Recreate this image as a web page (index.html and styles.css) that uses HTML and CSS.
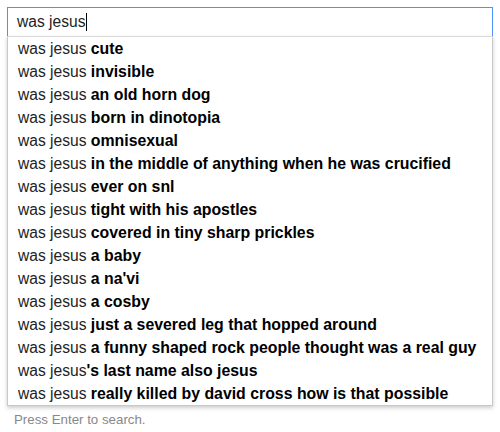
FILE: index.html
```html
<!DOCTYPE html>
<html>
<head>
<meta charset="utf-8">
<link rel="stylesheet" href="styles.css">
</head>
<body>
<div class="page">
  <div class="field">was jesus<span class="caret"></span></div>
  <ul class="suggest">
    <li>was jesus <b>cute</b></li>
    <li>was jesus <b>invisible</b></li>
    <li>was jesus <b>an old horn dog</b></li>
    <li>was jesus <b>born in dinotopia</b></li>
    <li>was jesus <b>omnisexual</b></li>
    <li>was jesus <b>in the middle of anything when he was crucified</b></li>
    <li>was jesus <b>ever on snl</b></li>
    <li>was jesus <b>tight with his apostles</b></li>
    <li>was jesus <b>covered in tiny sharp prickles</b></li>
    <li>was jesus <b>a baby</b></li>
    <li>was jesus <b>a na'vi</b></li>
    <li>was jesus <b>a cosby</b></li>
    <li>was jesus <b>just a severed leg that hopped around</b></li>
    <li>was jesus <b>a funny shaped rock people thought was a real guy</b></li>
    <li>was jesus<b>'s last name also jesus</b></li>
    <li>was jesus <b>really killed by david cross how is that possible</b></li>
  </ul>
  <p class="hint">Press Enter to search.</p>
</div>
</body>
</html>
```

FILE: styles.css
```css
html, body {
  margin: 0;
  padding: 0;
  background: #fff;
}
body {
  font-family: "Liberation Sans", Arial, sans-serif;
  color: #222;
}
.page {
  position: relative;
  padding: 7px 7px 0 7px;
}
.page::before {
  content: "";
  position: absolute;
  top: 0;
  left: 0;
  right: 0;
  height: 51px;
  background: #f1f1f1;
  border-bottom: 1px solid #e5e5e5;
  z-index: -1;
}
.field {
  box-sizing: border-box;
  height: 29px;
  border: 1px solid #4d90fe;
  border-bottom: none;
  background: #fff;
  padding: 0 9px;
  font-size: 15.6px;
  line-height: 28px;
  display: flex;
  align-items: center;
  color: #222;
}
.caret {
  display: inline-block;
  width: 1px;
  height: 18px;
  background: #000;
  margin-left: 1px;
}
.suggest {
  list-style: none;
  margin: 0;
  padding: 0;
  background: #fff;
  border: 1px solid #c8c8c8;
  border-top-color: #d9d9d9;
  box-shadow: 0 2px 4px rgba(0, 0, 0, 0.2);
}
.suggest li {
  height: 23px;
  line-height: 23px;
  padding: 0 10px;
  font-size: 15.6px;
  color: #222;
  white-space: nowrap;
}
.suggest b {
  color: #000;
  font-weight: bold;
  font-size: 15.85px;
}
.hint {
  margin: 6px 0 0 7px;
  font-size: 13.3px;
  line-height: 15px;
  color: #888;
}
```
